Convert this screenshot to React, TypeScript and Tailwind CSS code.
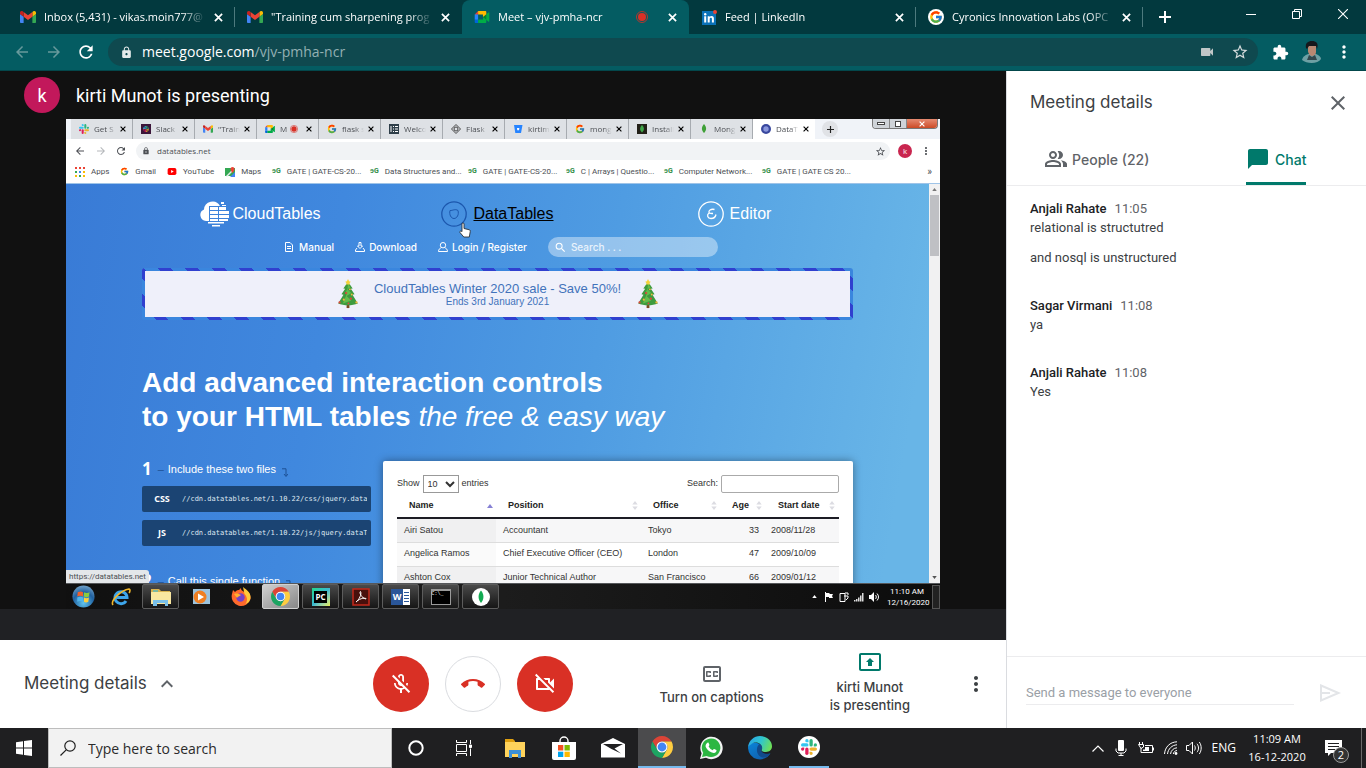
import type { ReactNode } from "react";
import {
  MdArrowBack,
  MdArrowForward,
  MdRefresh,
  MdLock,
  MdVideocam,
  MdStarBorder,
  MdExtension,
  MdMoreVert,
  MdClose,
  MdOutlinePeopleAlt,
  MdChatBubble,
  MdExpandLess,
  MdOutlineMicOff,
  MdCallEnd,
  MdOutlineVideocamOff,
  MdOutlineClosedCaption,
  MdOutlinePresentToAll,
  MdSearch,
} from "react-icons/md";
import { FcGoogle } from "react-icons/fc";

const segoe = "font-['Open_Sans','Noto_Sans',sans-serif]";
const gsans = "font-['Inter','Roboto',sans-serif]";
const roboto = "font-['Roboto',sans-serif]";
const arial = "font-['Liberation_Sans',Arial,sans-serif]";

/* ---------- Logos ---------- */

const Cross = ({ className }: { className?: string }) => (
  <svg viewBox="0 0 10 10" className={className} aria-hidden="true">
    <path d="M1 1l8 8M9 1L1 9" stroke="currentColor" strokeWidth="1.900" />
  </svg>
);

const Plus = ({ className }: { className?: string }) => (
  <svg viewBox="0 0 12 12" className={className} aria-hidden="true">
    <path d="M6 0v12M0 6h12" stroke="currentColor" strokeWidth="2" />
  </svg>
);

const GmailLogo = ({ className }: { className?: string }) => (
  <svg viewBox="52 42 88 66" className={className} aria-hidden="true">
    <path fill="#4285f4" d="M58 108h14V74L52 59v43c0 3.32 2.69 6 6 6" />
    <path fill="#34a853" d="M120 108h14c3.32 0 6-2.69 6-6V59l-20 15" />
    <path fill="#fbbc04" d="M120 48v26l20-15v-8c0-7.42-8.47-11.65-14.4-7.2" />
    <path fill="#ea4335" d="M72 74V48l24 18 24-18v26L96 92" />
    <path fill="#c5221f" d="M52 51v8l20 15V48l-5.6-4.2c-5.94-4.45-14.4-.22-14.4 7.2" />
  </svg>
);

const MeetLogo = ({ className }: { className?: string }) => (
  <svg viewBox="0 0 87.5 72" className={className} aria-hidden="true">
    <path fill="#00832d" d="M49.5 36l8.53 9.75 11.47 7.33 2-17.02-2-16.64-11.69 6.44z" />
    <path fill="#0066da" d="M0 51.5V66c0 3.315 2.685 6 6 6h14.5l3-10.96-3-9.54-9.95-3z" />
    <path fill="#e94235" d="M20.5 0L0 20.5l10.55 3 9.95-3 2.95-9.41z" />
    <path fill="#2684fc" d="M20.5 20.5H0v31h20.5z" />
    <path fill="#00ac47" d="M82.6 8.68L69.5 19.42v33.66l13.16 10.79c1.97 1.54 4.85.135 4.85-2.37V11c0-2.535-2.945-3.925-4.91-2.32zM49.5 36v15.5h-29V72h43c3.315 0 6-2.685 6-6V53.08z" />
    <path fill="#ffba00" d="M63.5 0h-43v20.5h29V36l20-16.57V6c0-3.315-2.685-6-6-6z" />
  </svg>
);

const LinkedInLogo = () => (
  <svg viewBox="0 0 16 16" className="size-4" aria-hidden="true">
    <path fill="#0a72b8" d="M1 2h14v14H1z" />
    <circle cx="4.2" cy="5.2" r="1.2" fill="#fff" />
    <path fill="#fff" d="M3.200 7.200h2v6.300h-2zM6.700 7.200h1.900v.9c.4-.7 1.100-1.100 2-1.100 1.700 0 2.300 1.100 2.300 2.700v3.800h-2V10c0-.8-.3-1.300-1-1.300-.8 0-1.200.6-1.200 1.400v3.400h-2z" />
    <circle cx="14" cy="3" r="2" fill="#ea4335" />
  </svg>
);

const RecordDot = ({ className }: { className?: string }) => (
  <svg viewBox="0 0 12 12" className={className} aria-hidden="true">
    <circle cx="6" cy="6" r="5.500" fill="none" stroke="#d93025" strokeWidth=".8" />
    <circle cx="6" cy="6" r="4" fill="#d93025" />
  </svg>
);

const ChromeLogo = ({ className }: { className?: string }) => {
  const blade = "M24 13h19.05A22 22 0 0 0 4.95 13l9.52 16.500A11 11 0 0 1 24 13z";
  return (
    <svg viewBox="2 2 44 44" className={className} aria-hidden="true">
      <path d={blade} fill="#db4437" />
      <path d={blade} fill="#ffcd40" transform="rotate(120 24 24)" />
      <path d={blade} fill="#1da462" transform="rotate(240 24 24)" />
      <circle cx="24" cy="24" r="11" fill="#fff" />
      <circle cx="24" cy="24" r="8.800" fill="#4285f4" />
    </svg>
  );
};

const SlackMark = ({ className }: { className?: string }) => (
  <svg viewBox="0 0 20 20" className={className} aria-hidden="true">
    <g fill="#36c5f0">
      <rect x="0" y="5.300" width="9.400" height="4.100" rx="2.050" />
      <path d="M9.400 4.100H7.350A2.050 2.050 0 1 1 9.400 2.050z" />
    </g>
    <g fill="#2eb67d">
      <rect x="10.600" y="0" width="4.100" height="9.400" rx="2.050" />
      <path d="M15.900 9.400V7.350A2.050 2.050 0 1 1 17.950 9.400z" />
    </g>
    <g fill="#ecb22e">
      <rect x="10.600" y="10.600" width="9.400" height="4.100" rx="2.050" />
      <path d="M10.600 15.900h2.050a2.050 2.050 0 1 1-2.050 2.050z" />
    </g>
    <g fill="#e01e5a">
      <rect x="5.300" y="10.600" width="4.100" height="9.400" rx="2.050" />
      <path d="M4.100 10.600v2.050a2.050 2.050 0 1 1-2.050-2.050z" />
    </g>
  </svg>
);

const WhatsAppLogo = () => (
  <svg viewBox="0 0 24 24" className="size-6" aria-hidden="true">
    <path fill="#f4f4f4" d="M1 23l1.600-5.800A11.200 11.200 0 1 1 7 21.700z" />
    <path fill="#2cb742" d="M3 21l1.200-4.300a9.300 9.300 0 1 1 3.400 3.200z" />
    <path fill="#fff" d="M8.500 6.700c.4-.4.900-.3 1.100.2l.8 1.900c.1.300 0 .6-.8 1.500.9 1.900 2.200 3.200 4.100 3.900.9-1.100 1.100-1.400 1.600-1.200l2 1c.4.200.2 1.200-.2 1.800-.9 1.200-2.300 1.500-4.200.8-3.200-1.100-5-3.200-6-5.300-.7-1.500-.3-3.400 1.600-4.600z" />
  </svg>
);

const EdgeLogo = () => (
  <svg viewBox="0 0 24 24" className="size-6" aria-hidden="true">
    <defs>
      <linearGradient id="edgeTop" x1="0" y1="0.300" x2="1" y2="0.600">
        <stop offset="0" stopColor="#2aa5e6" />
        <stop offset="0.500" stopColor="#2fc5cf" />
        <stop offset="1" stopColor="#6fe055" />
      </linearGradient>
      <linearGradient id="edgeLeft" x1="0" y1="0" x2="0.700" y2="1">
        <stop offset="0" stopColor="#0a84d8" />
        <stop offset="1" stopColor="#1160ae" />
      </linearGradient>
    </defs>
    <path fill="url(#edgeLeft)" d="M0 12C.5 7 6 6 9 7c5 1.500 5 5 4.500 6-2 3 2 6 8.500 5a12 12 0 0 1-22-6z" />
    <path fill="#114a8b" d="M9 13c0-3 2-5 3-5 2 1 2 4 1.500 5-1.500 3.500 3.500 6 8.200 4.300.8-.2.700.4.300 1C16 25 8 20 9 13z" />
    <path fill="url(#edgeTop)" d="M0 11.500C.5 4.500 6 0 12 0c7 0 12 4.800 12 10.300 0 4-3 5.700-6 5.700-3.400 0-4.800-1.200-4.300-2.200C16 9 9 4 3.500 8 1.500 9.200.4 10.500 0 11.500z" />
  </svg>
);

const FolderIcon = () => (
  <svg viewBox="0 0 24 24" className="size-6" aria-hidden="true">
    <path fill="#e0a010" d="M2 3h8l2 2v4H2z" />
    <path fill="#ffd35c" d="M2 6h20v15H2z" />
    <path fill="#3b8fd6" d="M6 14h12v8h-3v-4H9v4H6z" />
  </svg>
);

const StoreIcon = () => (
  <svg viewBox="0 0 24 24" className="size-6" aria-hidden="true">
    <path d="M8 7V5a4 4 0 0 1 8 0v2" fill="none" stroke="#fff" strokeWidth="1.400" />
    <path fill="#fff" d="M0 6h24v16a2 2 0 0 1-2 2H2a2 2 0 0 1-2-2z" />
    <path fill="#f25022" d="M6 9h5.300v5.500H6z" />
    <path fill="#7fba00" d="M12.500 9h5.300v5.500h-5.300z" />
    <path fill="#00a4ef" d="M6 15.700h5.300V21H6z" />
    <path fill="#ffb900" d="M12.500 15.700h5.300V21h-5.300z" />
  </svg>
);

const MailIcon = () => (
  <svg viewBox="0 0 24 20" className="h-5 w-6" aria-hidden="true">
    <path fill="#fff" d="M0 6L12 0l12 6v13.500H0z" />
    <path fill="#1f1f21" d="M2 6h20l-8.500 4.500L20 15.500 10.500 11z" />
  </svg>
);

/* ---------- Outer browser ---------- */

type Tab = { title: string; icon: ReactNode; active?: boolean; line?: boolean; rec?: boolean };

const tabs: Tab[] = [
  { title: "Inbox (5,431) - vikas.moin777@", icon: <GmailLogo className="h-3 w-4" />, line: true },
  { title: "\"Training cum sharpening prog", icon: <GmailLogo className="h-3 w-4" /> },
  { title: "Meet – vjv-pmha-ncr", icon: <MeetLogo className="h-3 w-4" />, active: true, rec: true },
  { title: "Feed | LinkedIn", icon: <LinkedInLogo />, line: true },
  {
    title: "Cyronics Innovation Labs (OPC",
    icon: (
      <span className="flex size-4 items-center justify-center rounded-full bg-white">
        <FcGoogle className="size-[14px]" />
      </span>
    ),
    line: true,
  },
];

function TabStrip() {
  return (
    <header className={`${segoe} flex h-[34px] shrink-0 bg-[#02393e] pl-2 text-[11px] text-white`}>
      <div className="flex min-w-0">
        {tabs.map((t) => (
          <div
            key={t.title}
            className={
              t.active
                ? "flex w-[227px] items-center rounded-t-lg bg-[#045c62] pr-2 pl-3"
                : "flex w-[227px] items-center pr-2 pl-3"
            }
          >
            {t.icon}
            <span className="ml-2 h-5 flex-1 overflow-hidden leading-5 whitespace-nowrap [mask-image:linear-gradient(to_right,black_85%,transparent)]">
              {t.title}
            </span>
            {t.rec && <RecordDot className="mr-3 size-3" />}
            <button aria-label={`Close ${t.title}`} className="ml-1 flex size-4 items-center justify-center">
              <Cross className="size-[9px]" />
            </button>
            <span className={t.line ? "-mr-2 ml-2 h-5 w-px bg-[#4d7a7e]" : "-mr-2 ml-2 h-5 w-px"} />
          </div>
        ))}
      </div>
      <button aria-label="New tab" className="ml-3 flex w-5 items-center justify-center">
        <Plus className="size-3" />
      </button>
      <div className="ml-auto flex h-7">
        <button aria-label="Minimize" className="flex w-[46px] items-center justify-center">
          <svg viewBox="0 0 10 10" className="size-[10px]"><path d="M0 5.500h10" stroke="#fff" /></svg>
        </button>
        <button aria-label="Restore" className="flex w-[46px] items-center justify-center">
          <svg viewBox="0 0 10 10" className="size-[10px]" fill="none" stroke="#fff">
            <path d="M.5 2.500h7v7h-7zM2.500 2.500v-2h7v7h-2" />
          </svg>
        </button>
        <button aria-label="Close" className="flex w-[46px] items-center justify-center">
          <svg viewBox="0 0 10 10" className="size-[10px]"><path d="M0 0l10 10M10 0L0 10" stroke="#fff" strokeWidth="1.100" /></svg>
        </button>
      </div>
    </header>
  );
}

function Toolbar() {
  return (
    <div className={`${segoe} flex h-[37px] shrink-0 items-center border-b border-[#03474b] bg-[#045c62] pr-3 pl-3 text-white`}>
      <button aria-label="Back" className="flex w-5 justify-center text-[#68999c]"><MdArrowBack className="size-[18px]" /></button>
      <button aria-label="Forward" className="ml-3 flex w-5 justify-center text-[#68999c]"><MdArrowForward className="size-[18px]" /></button>
      <button aria-label="Reload" className="ml-3 flex w-5 justify-center"><MdRefresh className="size-5" /></button>
      <div className="ml-3 flex h-7 flex-1 items-center rounded-full bg-[#0f494f] pr-[9px] pl-3">
        <MdLock className="size-[13px] text-[#e4eaea]" />
        <span className="ml-[9px] text-[14px] leading-5">
          meet.google.com<span className="text-[#93b0b3]">/vjv-pmha-ncr</span>
        </span>
        <MdVideocam className="mr-4 ml-auto size-4 text-[#c0c6c7]" />
        <MdStarBorder className="size-[18px] text-[#d5dcdd]" />
      </div>
      <button aria-label="Extensions" className="ml-3 flex w-5 justify-center"><MdExtension className="size-[17px]" /></button>
      <svg viewBox="0 0 20 22" className="ml-3 h-[22px] w-5" role="img" aria-label="Profile">
        <path fill="#6ea0a4" d="M0 19c1-4 4-5 6-6h8c3 1 5 3 5 5-3 5-14 5-19 1z" />
        <path fill="#b98872" d="M6 5h8v6c0 3-3 4-4 4s-4-2-4-5z" />
        <path fill="#15181c" d="M4 7C3 2 6 0 10 0s7 2 5 8l-1-3-7 0-2 3z" />
        <path fill="#33474c" d="M7 14l3 2 3-2 2 5H5z" />
      </svg>
      <button aria-label="Menu" className="ml-3 flex w-5 justify-center"><MdMoreVert className="size-5" /></button>
    </div>
  );
}

/* ---------- Presented screen ---------- */

const geeks = <span className="w-[9px] text-[7px] leading-none font-bold text-[#2f8d46]">ɘG</span>;

const innerTabs: { label: string; icon: ReactNode }[] = [
  { label: "Get S", icon: <SlackMark className="size-[10px]" /> },
  { label: "Slack", icon: <span className="flex size-[10px] items-center justify-center bg-[#3b1539]"><SlackMark className="size-[6px]" /></span> },
  { label: "\"Train", icon: <GmailLogo className="h-2 w-[10px]" /> },
  { label: "M", icon: <MeetLogo className="h-2 w-[10px]" /> },
  { label: "flask s", icon: <FcGoogle className="size-[10px]" /> },
  {
    label: "Welco",
    icon: (
      <svg viewBox="0 0 10 10" className="size-[10px]"><path fill="#2f3f4a" d="M0 0h10v10H0z" /><path stroke="#fff" d="M2 2v6M4 2.500h1M6 2.500h3M4 5h1M6 5h3M4 7.500h1M6 7.500h3" /></svg>
    ),
  },
  {
    label: "Flask",
    icon: (
      <svg viewBox="0 0 10 10" className="size-[10px]" fill="none" stroke="#444"><path d="M5 .5L9.500 5 5 9.500.5 5z" /><circle cx="5" cy="5" r="2" /></svg>
    ),
  },
  {
    label: "kirtim",
    icon: (
      <svg viewBox="0 0 10 10" className="size-[10px]"><path fill="#2684ff" d="M1 1h8.500L8 9H2.300z" /><path fill="#fff" d="M4 4h2.400L6 6.300H4.300z" /></svg>
    ),
  },
  { label: "mong", icon: <FcGoogle className="size-[10px]" /> },
  {
    label: "Install",
    icon: (
      <svg viewBox="0 0 10 10" className="size-[10px]"><path fill="#222018" d="M0 0h10v10H0z" /><path fill="#3fa548" d="M5 1c3 3 2 6 0 7.500C3 7 2 4 5 1z" /></svg>
    ),
  },
  {
    label: "Mong",
    icon: <svg viewBox="0 0 10 10" className="size-[10px]"><path fill="#3fa037" d="M5 0c3.500 4 2 7 0 9C3 7 1.500 4 5 0z" /></svg>,
  },
  {
    label: "DataT",
    icon: (
      <svg viewBox="0 0 10 10" className="size-[10px]"><circle cx="5" cy="5" r="5" fill="#39489e" /><circle cx="5" cy="5" r="2.700" fill="#8a97dc" /></svg>
    ),
  },
];

const gateLinks = [
  "GATE | GATE-CS-20...",
  "Data Structures and...",
  "GATE | GATE-CS-20...",
  "C | Arrays | Questio...",
  "Computer Network...",
  "GATE | GATE CS 20...",
];

function InnerChrome() {
  return (
    <div className={`${segoe} shrink-0 text-[8px] text-[#4c4f54]`}>
      <div className="flex h-5 bg-[#f0f3f8] pl-[5px]">
        {innerTabs.map((t, i) => (
          <div
            key={t.label}
            className={
              i === 11
                ? "flex w-[62px] items-center bg-white pr-[5px] pl-2"
                : "flex w-[62px] items-center border-r border-[#a7abb0] bg-[#dee1e5] pr-[5px] pl-2"
            }
          >
            {t.icon}
            <span className="ml-[5px] h-3 w-5 flex-1 overflow-hidden leading-3 whitespace-nowrap [mask-image:linear-gradient(to_right,black_60%,transparent)]">{t.label}</span>
            {i === 3 && <RecordDot className="mr-1 size-2" />}
            <Cross className="mr-px ml-1 size-[6px] text-black" />
          </div>
        ))}
        <span className="ml-[7px] flex size-4 items-center justify-center self-center rounded-full bg-[#e0e2e6]">
          <Plus className="size-[7px] text-[#222]" />
        </span>
        <div className="mr-[2px] ml-auto flex h-[10px] overflow-hidden rounded-b-sm border border-t-0 border-[#777]">
          <span className="flex w-[17px] items-center justify-center border-r border-[#888] bg-[#cfd3d8]"><span className="h-[3px] w-2 border border-[#444] bg-white" /></span>
          <span className="flex w-[17px] items-center justify-center border-r border-[#888] bg-[#cfd3d8]"><span className="size-[6px] border border-[#444] bg-white" /></span>
          <span className="flex w-[30px] items-center justify-center bg-gradient-to-b from-[#e58a70] to-[#cc4a24]"><Cross className="size-[6px] text-white" /></span>
        </div>
      </div>
      <div className="flex h-6 items-center bg-white pr-2 pl-2">
        <MdArrowBack className="size-3" />
        <MdArrowForward className="ml-[9px] size-3 text-[#b5b8bb]" />
        <MdRefresh className="ml-2 size-3" />
        <div className="ml-[9px] flex h-[18px] flex-1 items-center rounded-full bg-[#f1f3f5] pr-1 pl-[6px]">
          <MdLock className="size-2" />
          <span className="ml-[7px]">datatables.net</span>
          <MdStarBorder className="ml-auto size-[11px]" />
        </div>
        <span className="ml-2 flex size-[14px] items-center justify-center rounded-full bg-[#c9264f] text-white">k</span>
        <MdMoreVert className="ml-2 size-3" />
      </div>
      <div className="flex h-[21px] items-center gap-[11px] border-b border-[#9fc4e8] bg-white pr-2 pb-[3px] pl-[9px] font-['Roboto',sans-serif] whitespace-nowrap">
        <span className="flex items-center gap-[6px]">
          <svg viewBox="0 0 10 10" className="size-[10px]">
            <path fill="#ea4335" d="M0 0h2v2H0zM4 0h2v2H4zM8 0h2v2H8z" />
            <path fill="#34a853" d="M0 4h2v2H0zM4 8h2v2H4z" />
            <path fill="#4285f4" d="M4 4h2v2H4z" />
            <path fill="#fbbc04" d="M8 4h2v2H8zM8 8h2v2H8zM0 8h2v2H0z" />
          </svg>
          Apps
        </span>
        <span className="flex items-center gap-[6px]"><FcGoogle className="size-[9px]" />Gmail</span>
        <span className="flex items-center gap-[6px]">
          <svg viewBox="0 0 10 8" className="h-[7px] w-[10px]"><rect width="10" height="8" rx="2" fill="#f00" /><path fill="#fff" d="M4 2.300L7 4 4 5.700z" /></svg>
          YouTube
        </span>
        <span className="flex items-center gap-[6px]">
          <svg viewBox="0 0 10 10" className="size-[10px]">
            <path fill="#34a853" d="M0 1h10v8H0z" /><path fill="#4285f4" d="M5 10l5-5v5z" /><path fill="#e8eaed" d="M1 9l7-7 1 1-7 7z" />
            <path fill="#ea4335" d="M7.500 0a2 2 0 0 1 2 2C9.500 3.500 7.500 6 7.500 6s-2-2.500-2-4a2 2 0 0 1 2-2z" />
          </svg>
          Maps
        </span>
        {gateLinks.map((g, i) => (
          <span key={i} className="flex w-[87px] items-center gap-[6px]">{geeks}{g}</span>
        ))}
        <span className="ml-auto text-[10px]">»</span>
      </div>
    </div>
  );
}

const people = [
  ["Airi Satou", "Accountant", "Tokyo", "33", "2008/11/28"],
  ["Angelica Ramos", "Chief Executive Officer (CEO)", "London", "47", "2009/10/09"],
  ["Ashton Cox", "Junior Technical Author", "San Francisco", "66", "2009/01/12"],
];

const Sort = () => (
  <svg viewBox="0 0 6 10" className="h-[9px] w-[6px]" fill="#dcdce2" aria-hidden="true"><path d="M0 4l3-4 3 4zM0 6h6l-3 4z" /></svg>
);

function DataCard() {
  return (
    <div className="h-[160px] min-w-0 flex-1 rounded-t-[2px] bg-white px-[14px] pt-[14px] text-[9px] text-[#333] shadow-[0_0_8px_rgba(0,0,0,0.4)]">
      <div className="flex h-[18px] items-center justify-between">
        <div className="flex items-center gap-[3px]">
          <label htmlFor="len">Show</label>
          <select id="len" className="h-[18px] w-9 border border-[#999] bg-white text-[9px]" defaultValue="10">
            <option>10</option>
            <option>25</option>
          </select>
          <span>entries</span>
        </div>
        <div className="flex items-center gap-[3px]">
          <label htmlFor="filter">Search:</label>
          <input id="filter" className="h-[18px] w-[118px] rounded-[2px] border border-[#aaa] bg-white px-1" />
        </div>
      </div>
      <table className="mt-px w-full table-fixed border-collapse whitespace-nowrap">
        <colgroup>
          <col className="w-[99px]" /><col className="w-[145px]" /><col className="w-[79px]" /><col className="w-[44px]" /><col />
        </colgroup>
        <thead>
          <tr className="h-6 border-b-2 border-[#1c1c24] text-left text-[#222]">
            <th className="p-0 pl-3">
              <div className="flex items-center justify-between pr-[3px]">Name
                <svg viewBox="0 0 6 4" className="h-1 w-[6px]"><path fill="#8681d4" d="M0 4l3-4 3 4z" /></svg>
              </div>
            </th>
            <th className="p-0 pl-3"><div className="flex items-center justify-between pr-[3px]">Position <Sort /></div></th>
            <th className="p-0 pl-3"><div className="flex items-center justify-between pr-[3px]">Office <Sort /></div></th>
            <th className="p-0 pl-3"><div className="flex items-center justify-between pr-[2px]">Age <Sort /></div></th>
            <th className="p-0 pl-[14px]"><div className="flex items-center justify-between pr-[4px]">Start date <Sort /></div></th>
          </tr>
        </thead>
        <tbody>
          {people.map((r, i) => (
            <tr key={r[0]} className={i % 2 ? "h-6 border-b border-[#ddd] bg-white" : "h-6 border-b border-[#ddd] bg-[#f7f7f8]"}>
              <td className={i % 2 ? "bg-[#fafafa] p-0 pl-[7px]" : "bg-[#f0f0f1] p-0 pl-[7px]"}>{r[0]}</td>
              <td className="p-0 pl-[7px]">{r[1]}</td>
              <td className="p-0 pl-[7px]">{r[2]}</td>
              <td className="p-0 pr-[5px] text-right">{r[3]}</td>
              <td className="p-0 pl-[7px]">{r[4]}</td>
            </tr>
          ))}
        </tbody>
      </table>
    </div>
  );
}

const Tree = () => (
  <svg viewBox="0 0 22 32" className="h-[30px] w-[22px]" aria-hidden="true">
    <path fill="#7a4a1e" d="M9.500 26h3v5h-3z" />
    <path fill="#3e9b3f" d="M11 3l5 7-2 .3 4 6-2.200.4L21.500 26c-6 2.500-15 2.500-21 0L6.200 16.700 4 16.300l4-6L6 10z" />
    <path fill="#62bd4b" d="M11 4l2.500 5-3 2 4 4-5 3 5 5-9 3 3-7 1-3-1-2 2-4z" />
    <path fill="#f7d33a" d="M11 0l1.200 2.500L14 3l-1.500 1.500.3 2L11 5.500 9.200 6.500l.3-2L8 3l1.800-.5z" />
    <g fill="#e0463c"><circle cx="9" cy="15" r="1.200" /><circle cx="14" cy="21" r="1.200" /><circle cx="2" cy="25" r="1.200" /><circle cx="11.500" cy="26" r="1" /></g>
    <g fill="#f3b63b"><circle cx="13" cy="11" r="1" /><circle cx="6.500" cy="22" r="1.100" /><circle cx="20" cy="25" r="1.200" /><circle cx="15" cy="16.500" r="1" /></g>
  </svg>
);

function Step({ n, text }: { n: string; text: string }) {
  return (
    <div className="flex h-4 items-center text-[11px] font-medium text-white">
      <span className="font-['Open_Sans',sans-serif] text-[17px] leading-4 font-bold">{n}</span>
      <span className="ml-[6px] w-[10px] text-[#1d5195]">–</span>
      <span>{text}</span>
      <svg viewBox="0 0 6 10" className="mt-2 ml-[6px] h-[10px] w-[6px]" fill="none" stroke="#1d5195"><path d="M0 .8h4v7M2 6l2 2.500L6 6" /></svg>
    </div>
  );
}

function CodeBar({ kind, url }: { kind: string; url: string }) {
  return (
    <div className="flex h-[26px] items-center rounded-[2px] bg-[#1b4473] pr-1 text-white">
      <span className="w-10 text-center font-['Open_Sans',sans-serif] text-[9px] font-bold">{kind}</span>
      <code className="h-3 flex-1 overflow-hidden font-['DejaVu_Sans_Mono','Liberation_Mono',monospace] text-[7px] leading-3 whitespace-nowrap text-[#dfe8f2]">{url}</code>
    </div>
  );
}

function DataTablesPage() {
  return (
    <div className={`${arial} relative flex min-h-0 flex-1 bg-white`}>
      <div className="min-w-0 flex-1 overflow-hidden bg-[linear-gradient(100deg,#397bd6_0%,#4088de_30%,#4f9ce2_60%,#68b5e7_95%)] px-[76px] pt-4">
        <nav className="grid h-7 grid-cols-3 text-[16px] text-white">
          <a href="#cloud" className="flex items-center justify-center gap-[3px]">
            <svg viewBox="0 0 29 26" className="h-[26px] w-[29px]" fill="#fff">
              <path d="M9 20H6a6 6 0 0 1-2-11.500A8.500 8.500 0 0 1 20 5H9z" />
              <path d="M10 6h8v3h-8zM19 6h7v3h-7zM10 10h8v3h-8zM19 10h10v3H19zM10 14h8v3h-8zM19 14h10v3H19zM10 18h8v2h-8zM19 18h9v2h-9zM8 21h16v1.500H8zM12 24h8v1.500h-8zM21 1h3v2h-3zM22 4h4v1h-4z" />
            </svg>
            CloudTables
          </a>
          <a href="#datatables" className="relative flex items-center justify-center gap-[6px] text-black underline">
            <svg viewBox="0 0 26 26" className="size-[26px]" fill="none" stroke="#1c57ad">
              <circle cx="13" cy="13" r="12.200" strokeWidth="1.300" />
              <path d="M9 9.500c2.500.3 5-2 8 0 1.200 4-1 8-4 8s-5-4-4-8z" />
            </svg>
            DataTables
            <svg viewBox="0 0 12 16" className="absolute top-[22px] left-20 h-4 w-3" fill="#fff" stroke="#222" strokeWidth=".8">
              <path d="M3 9V2c0-1.500 2-1.500 2 0v4.500l5 1.200c1.200.3 1.400 1 1.200 2L10.300 15H4.800L1 10.500c-.7-1.300 1-2 2-.8z" />
            </svg>
          </a>
          <a href="#editor" className="flex items-center justify-center gap-[6px]">
            <svg viewBox="0 0 26 26" className="size-[26px]" fill="none" stroke="#fff">
              <circle cx="13" cy="13" r="12.200" strokeWidth="1.300" />
              <path strokeWidth="1.300" d="M16.500 8.500c-4-1-6 1.500-5.500 3 .4 1.200 2 1 4 1M11 12c-2.500 2-1.500 5.500 2 5.500 2.500 0 4.500-1.500 5-4" />
            </svg>
            Editor
          </a>
        </nav>
        <div className={`${gsans} mt-[9px] flex h-5 items-center justify-center gap-[21px] pl-2 text-[10px] font-medium text-white`}>
          <a href="#manual" className="flex items-center gap-[6px]">
            <svg viewBox="0 0 8 10" className="h-[10px] w-2" fill="none" stroke="#fff"><path d="M.5.5h4.500l2.500 2.500v6.500h-7zM2 4.500h4M2 6.500h4" /></svg>
            Manual
          </a>
          <a href="#download" className="flex items-center gap-1">
            <svg viewBox="0 0 10 10" className="size-[10px]" fill="none" stroke="#fff"><path d="M4 .5h2V4h1.500L5 6.500 2.500 4H4zM2 6L.5 8v1.500h9V8L8 6" /></svg>
            Download
          </a>
          <a href="#login" className="flex items-center gap-1">
            <svg viewBox="0 0 10 10" className="size-[10px]" fill="none" stroke="#fff"><circle cx="5" cy="3.200" r="2.700" /><path d="M3.500 5.500C1.500 6.500.5 7.500.5 9.500h9c0-2-1-3-3-4" /></svg>
            Login / Register
          </a>
          <div className="flex h-5 w-[170px] items-center rounded-full bg-white/40 pl-[6px]">
            <MdSearch className="size-[13px] shrink-0" />
            <input aria-label="Search site" placeholder="Search . . ." className="ml-1 w-32 bg-transparent placeholder:text-white/80" />
          </div>
        </div>
        <div className="mt-[11px] h-[52px] rounded-[3px] bg-[repeating-linear-gradient(45deg,#3a86de_0_10px,#3040cf_10px_19px)] p-[3px]">
          <div className="flex h-full items-center justify-center bg-[#eff0fa] text-[#4273bb]">
            <Tree />
            <div className="w-[278px] text-center">
              <p className="text-[13px] leading-[15px]">CloudTables Winter 2020 sale - Save 50%!</p>
              <p className="text-[10px] leading-3">Ends 3rd January 2021</p>
            </div>
            <Tree />
          </div>
        </div>
        <h1 className="mt-[46px] text-[28px] leading-[34px] font-bold whitespace-nowrap text-white">
          Add advanced interaction controls
          <br />
          to your HTML tables <em className="font-normal">the free &amp; easy way</em>
        </h1>
        <div className="mt-[27px] flex gap-3">
          <div className="w-[229px] shrink-0">
            <Step n="1" text="Include these two files" />
            <div className="mt-[9px] flex flex-col gap-2">
              <CodeBar kind="CSS" url="//cdn.datatables.net/1.10.22/css/jquery.dataTables.min.css" />
              <CodeBar kind="JS" url="//cdn.datatables.net/1.10.22/js/jquery.dataTables.min.js" />
            </div>
            <div className="mt-[27px]"><Step n="2" text="Call this single function" /></div>
          </div>
          <DataCard />
        </div>
      </div>
      <div className="flex w-[11px] shrink-0 flex-col items-center justify-between bg-[#f1f1f2] py-1">
        <svg viewBox="0 0 6 4" className="h-[3px] w-[5px]" fill="#777"><path d="M0 4l3-4 3 4z" /></svg>
        <span className="mt-1 mb-auto h-[61px] w-[9px] bg-[#bfc0c4]" />
        <svg viewBox="0 0 6 4" className="h-[3px] w-[5px]" fill="#555"><path d="M0 0h6L3 4z" /></svg>
      </div>
      <span className={`${roboto} absolute bottom-0 left-0 rounded-tr-[3px] bg-[#e4e7ea] px-[3px] text-[8px] leading-[13px] text-[#4c4f54]`}>
        https://datatables.net
      </span>
    </div>
  );
}

const seven: { name: string; kind: "plain" | "open" | "lit"; icon: ReactNode }[] = [
  {
    name: "Internet Explorer", kind: "plain",
    icon: (
      <svg viewBox="0 0 20 20" className="size-5" fill="none">
        <path d="M4 10.500h12A6 6 0 1 0 15 14" stroke="#3da5ea" strokeWidth="3" />
        <path d="M2 18C-1 14 10 3 18 2c1.500 0 1 3 0 4" stroke="#f2b72a" strokeWidth="1.600" />
      </svg>
    ),
  },
  {
    name: "Explorer", kind: "open",
    icon: (
      <svg viewBox="0 0 22 20" className="h-5 w-[22px]">
        <path fill="#d9b34f" d="M1 2h8l2 2h9v12H1z" /><path fill="#f9e7a0" d="M1 5h20v12H1z" /><path fill="#7db9a0" d="M3 3h5v2H3z" /><path fill="#79c0ea" d="M3 13h15v6h-3v-3H7v3H3z" />
      </svg>
    ),
  },
  {
    name: "Media Player", kind: "plain",
    icon: (
      <svg viewBox="0 0 18 16" className="h-4 w-[18px]"><rect width="17" height="15" x="1" fill="#9cc3dd" /><circle cx="8" cy="8" r="6.500" fill="#f07f22" /><path fill="#fff" d="M6 4.500l6 3.500-6 3.500z" /></svg>
    ),
  },
  {
    name: "Firefox", kind: "plain",
    icon: (
      <svg viewBox="0 0 20 20" className="size-5">
        <path fill="#ff6a2c" d="M1 7l1-4 2 2c2-2 3-2 4-2l2-2c0 3 2 3 4 4l1-2c3 2 5 5 4.500 9A9 9 0 1 1 1 7z" />
        <path fill="#ffca3a" d="M12 0c4 3 8 6 7.500 11-.5 3-2 5-5 6 3-4 1-8-1-10z" />
        <circle cx="9.500" cy="10.500" r="4.200" fill="#7542c8" /><path fill="#ffb02e" d="M3 7c3-1 5 0 7 1-2 2-3 1-4 3z" />
      </svg>
    ),
  },
  { name: "Chrome", kind: "lit", icon: <ChromeLogo className="size-[19px]" /> },
  {
    name: "PyCharm", kind: "open",
    icon: <span className="flex size-[18px] items-center justify-center bg-gradient-to-br from-[#21d789] via-[#3bb8d0] to-[#e9ee4a]"><span className="flex h-3 w-[13px] items-center justify-center bg-black text-[8px] font-bold text-white">PC</span></span>,
  },
  {
    name: "Acrobat", kind: "open",
    icon: (
      <svg viewBox="0 0 18 18" className="size-[18px]"><path fill="#48100c" stroke="#c3281b" strokeWidth="1.500" d="M1 1h16v16H1z" /><path d="M4 14c3-2 6-8 4.500-10.500C7 4 9 10 14 11c1-1-5-2-10 3" fill="none" stroke="#fff" /></svg>
    ),
  },
  {
    name: "Word", kind: "open",
    icon: <span className="flex h-4 w-[19px] bg-white"><span className="w-3 bg-[#2a5699] text-center text-[9px] leading-4 font-bold text-white">W</span><svg viewBox="0 0 7 16" className="h-4 w-[7px]" stroke="#2a5699"><path d="M1 3.500h5M1 6.500h5M1 9.500h5M1 12.500h5" /></svg></span>,
  },
  {
    name: "Command Prompt", kind: "open",
    icon: <span className="h-4 w-5 border border-t-2 border-[#9a9a9a] bg-black text-left font-['Liberation_Mono',monospace] text-[5px] leading-[7px] text-white">C:\_</span>,
  },
  {
    name: "Compass", kind: "open",
    icon: <svg viewBox="0 0 18 18" className="size-[18px]"><circle cx="9" cy="9" r="9" fill="#fff" /><path fill="#13aa52" d="M9 2.500c3.500 4 3 9 0 12.500C6 11.500 5.500 6.500 9 2.500z" /></svg>,
  },
];

function SevenTaskbar() {
  return (
    <div className={`${segoe} flex h-[26px] shrink-0 items-center border-t border-[#55575a] bg-gradient-to-r from-[#101010] via-[#1c1c1c] to-[#0c0c0c] text-white`}>
      <button aria-label="Start" className="flex h-full w-[34px] items-center justify-center">
        <svg viewBox="0 0 24 24" className="size-[23px]">
          <defs>
            <radialGradient id="orb" cx="0.500" cy="0.800" r="0.800"><stop offset="0" stopColor="#5fc4ee" /><stop offset="0.600" stopColor="#20609f" /><stop offset="1" stopColor="#6fa0c8" /></radialGradient>
          </defs>
          <circle cx="12" cy="12" r="11.500" fill="url(#orb)" />
          <path fill="#f0602a" d="M6 7.500c2-1 4-1 5.500 0V12c-2-1-4-1-6 0z" /><path fill="#8ccb3c" d="M12.500 7.500c2 1 4 1 5.800 0l-.6 4.500c-2 1-3.700 1-5.200 0z" />
          <path fill="#52b5ea" d="M5.500 13c2-1 4-1 6 0v4.500c-1.500-1-4-1-6 0z" /><path fill="#ffcf3c" d="M12.500 13c1.500 1 3.500 1 5.200 0l-.7 4.500c-1.500 1-3 1-4.500 0z" />
        </svg>
      </button>
      <div className="ml-[2px] flex h-full items-stretch gap-[3px]">
        {seven.map((a) => (
          <button
            key={a.name}
            aria-label={a.name}
            className={
              a.kind === "plain"
                ? "flex w-[37px] items-center justify-center"
                : a.kind === "open"
                  ? "flex w-[37px] items-center justify-center rounded-[2px] border border-[#5c5c5c] bg-gradient-to-b from-[#4a4a4a] to-[#161616]"
                  : "flex w-[37px] items-center justify-center rounded-[2px] border border-[#d0d0d0] bg-gradient-to-br from-[#d0d0d0] to-[#888]"
            }
          >
            {a.icon}
          </button>
        ))}
      </div>
      <div className="ml-auto flex items-center gap-[5px]">
        <svg viewBox="0 0 6 4" className="mr-[2px] h-[3px] w-[5px]" fill="#fff"><path d="M0 4l3-4 3 4z" /></svg>
        <svg viewBox="0 0 10 10" className="size-[10px]" fill="#fff"><path d="M1 0h1v10H1zM2 1h3.500v1H9L8 4l1 2H5V5H2z" /></svg>
        <svg viewBox="0 0 10 10" className="size-[10px]" fill="none" stroke="#fff"><path d="M1 1.500h5v8H1zM5 4h4v2L7 8" /><path d="M6 1h3v2" /></svg>
        <svg viewBox="0 0 10 10" className="size-[10px]" fill="#ddd"><path d="M0 8h1.500v1.500H0zM2 7h1.500v2.500H2zM4 5.500h1.500v4H4zM6 3.500h1.500v6H6zM8 1h1.500v8.500H8z" /></svg>
        <svg viewBox="0 0 10 10" className="size-[10px]" fill="#fff"><path d="M0 3h2l3-3v10L2 7H0z" /><path d="M6.500 3c1 1 1 3 0 4M8 1.500c2 2 2 5 0 7" fill="none" stroke="#fff" /></svg>
        <div className="ml-[3px] w-10 text-center font-['Roboto',sans-serif] text-[8px] leading-[11px]">11:10 AM<br />12/16/2020</div>
      </div>
      <span className="ml-[5px] h-6 w-2 border border-[#555] bg-[#222]" />
    </div>
  );
}

/* ---------- Meet ---------- */

function Stage() {
  return (
    <section className="flex min-h-0 flex-1 flex-col bg-[#202124]">
      <div className="flex min-h-0 flex-1 flex-col bg-[#111]">
        <div className={`${roboto} flex h-12 shrink-0 items-center gap-4 pl-6 text-[18px] text-white`}>
          <span className="flex size-9 items-center justify-center rounded-full bg-[#c2185b]">k</span>
          <span>kirti Munot is presenting</span>
        </div>
        <div className="flex min-h-0 flex-1 flex-col px-[66px]">
          <InnerChrome />
          <DataTablesPage />
          <SevenTaskbar />
        </div>
      </div>
      <div className="h-[31px] shrink-0" />
    </section>
  );
}

function ControlBar() {
  return (
    <footer className={`${gsans} grid h-[88px] shrink-0 grid-cols-[1fr_auto_1fr] items-center bg-white text-[#3c4043]`}>
      <button className="flex items-center gap-2 pl-6 text-[17px]">
        Meeting details <MdExpandLess className="size-6 text-[#5f6368]" />
      </button>
      <div className="-ml-[60px] flex gap-4">
        <button aria-label="Turn on microphone" className="flex size-14 items-center justify-center rounded-full bg-[#d93025] text-white"><MdOutlineMicOff className="size-6" /></button>
        <button aria-label="Leave call" className="flex size-14 items-center justify-center rounded-full border border-[#dadce0] text-[#d93025]"><MdCallEnd className="size-6" /></button>
        <button aria-label="Turn on camera" className="flex size-14 items-center justify-center rounded-full bg-[#d93025] text-white"><MdOutlineVideocamOff className="size-6" /></button>
      </div>
      <div className="flex items-center justify-end pr-[18px] text-[13px] font-medium">
        <button className="flex flex-col items-center gap-px"><MdOutlineClosedCaption className="size-6 text-[#5f6368]" /><span className="leading-5">Turn on captions</span></button>
        <button className="ml-[66px] flex flex-col items-center pb-1 text-center leading-[18px]">
          <MdOutlinePresentToAll className="mb-1 size-6 text-[#00796b]" />
          kirti Munot<br />is presenting
        </button>
        <button aria-label="More options" className="ml-[54px]"><MdMoreVert className="size-6" /></button>
      </div>
    </footer>
  );
}

const messages = [
  { who: "Anjali Rahate", at: "11:05", lines: ["relational is structutred", "and nosql is unstructured"] },
  { who: "Sagar Virmani", at: "11:08", lines: ["ya"] },
  { who: "Anjali Rahate", at: "11:08", lines: ["Yes"] },
];

function ChatPanel() {
  return (
    <aside className="flex w-[360px] shrink-0 flex-col border-l border-[#dadce0] bg-white">
      <div className={`${gsans} flex h-16 shrink-0 items-center justify-between pr-4 pl-[23px] text-[17px] text-[#3c4043]`}>
        <h2>Meeting details</h2>
        <button aria-label="Close panel"><MdClose className="size-6 text-[#5f6368]" /></button>
      </div>
      <div className={`${gsans} grid h-[51px] shrink-0 grid-cols-2 justify-items-center border-b border-[#ececee] text-[14px] font-medium`}>
        <button className="flex items-center gap-1 pb-[2px] text-[#5f6368]"><MdOutlinePeopleAlt className="size-6" />People (22)</button>
        <button className="flex items-center gap-[5px] border-b-[3px] border-[#00796b] pt-px text-[#00796b]"><MdChatBubble className="size-6" />Chat</button>
      </div>
      <div className={`${roboto} flex flex-1 flex-col gap-[29px] px-[23px] pt-[13px] text-[13px] leading-[19px] text-[#3c4043]`}>
        {messages.map((m, i) => (
          <article key={i}>
            <h3 className="font-medium text-[#202124]">{m.who}<span className="ml-2 font-normal text-[#5f6368]">{m.at}</span></h3>
            <div className="flex flex-col gap-[11px]">
              {m.lines.map((l) => <p key={l}>{l}</p>)}
            </div>
          </article>
        ))}
      </div>
      <form className={`${roboto} flex h-[72px] shrink-0 items-center border-t border-[#ececee] pr-6 pl-[19px]`}>
        <input aria-label="Send a message to everyone" placeholder="Send a message to everyone" className="h-6 min-w-0 flex-1 border-b border-[#ececee] text-[13px] placeholder:text-[#9aa0a6]" />
        <button type="button" aria-label="Send message" className="ml-6">
          <svg viewBox="0 0 24 24" className="size-6" fill="none" stroke="#e3e5e8" strokeWidth="2"><path d="M3 4.500L20.500 12 3 19.500zM3 12h9" /></svg>
        </button>
      </form>
    </aside>
  );
}

/* ---------- Windows 10 taskbar ---------- */

function Taskbar() {
  return (
    <div className={`${segoe} flex h-10 shrink-0 items-center bg-[#1f1f21] text-white`}>
      <button aria-label="Start" className="flex h-full w-12 items-center justify-center">
        <svg viewBox="0 0 16 16" className="size-4" fill="#fff"><path d="M0 2.300l7-1v6.200H0zM8 1.100L16 0v7.500H8zM0 8.500h7v6.200l-7-1zM8 8.500h8V16l-8-1.100z" /></svg>
      </button>
      <div className="flex h-full w-[344px] items-center border border-[#bdbdbd] bg-[#f2f2f2] pl-[11px]">
        <svg viewBox="0 0 16 16" className="size-4" fill="none" stroke="#1f1f1f" strokeWidth="1.200"><circle cx="10" cy="6" r="5.200" /><path d="M6.200 9.800L.5 15.500" /></svg>
        <input aria-label="Type here to search" placeholder="Type here to search" className="ml-3 w-[280px] bg-transparent text-[14px] placeholder:text-[#2b2b2b]" />
      </div>
      <button aria-label="Cortana" className="flex h-full w-12 items-center justify-center">
        <svg viewBox="0 0 16 16" className="size-4" fill="none" stroke="#fff" strokeWidth="2"><circle cx="8" cy="8" r="6.700" /></svg>
      </button>
      <button aria-label="Task view" className="mr-[3px] flex h-full w-12 items-center justify-center">
        <svg viewBox="0 0 16 16" className="size-4" fill="none" stroke="#fff"><path d="M.5 0v2.500h10V0M.5 4.500h10v7H.5zM.5 16v-2.500h10V16M14.500 0v4M14.500 8.500V16" /><path d="M13.500 5h2v2.500h-2z" fill="#fff" /></svg>
      </button>
      <div className="flex h-full gap-px">
        <button aria-label="File Explorer" className="flex w-12 items-center justify-center"><FolderIcon /></button>
        <button aria-label="Store" className="flex w-12 items-center justify-center"><StoreIcon /></button>
        <button aria-label="Mail" className="flex w-12 items-center justify-center"><MailIcon /></button>
        <button aria-label="Chrome" className="flex w-12 items-center justify-center border-b-2 border-[#76b9ed] bg-[#4b4b4d]"><ChromeLogo className="size-[22px]" /></button>
        <button aria-label="WhatsApp" className="flex w-12 items-center justify-center"><WhatsAppLogo /></button>
        <button aria-label="Edge" className="flex w-12 items-center justify-center"><EdgeLogo /></button>
        <button aria-label="Slack" className="mx-1 flex w-10 items-center justify-center border-b-2 border-[#76b9ed]">
          <span className="flex size-[22px] items-center justify-center rounded-full bg-white"><SlackMark className="size-4" /></span>
        </button>
      </div>
      <div className="ml-auto flex h-full items-center text-[11px]">
        <svg viewBox="0 0 12 7" className="h-[7px] w-3" fill="none" stroke="#fff" strokeWidth="1.200"><path d="M.5 6.500L6 1l5.500 5.500" /></svg>
        <svg viewBox="0 0 12 16" className="ml-[11px] h-4 w-3" fill="none" stroke="#fff"><rect x="3" y="0" width="6" height="11" rx="1" fill="#fff" stroke="none" /><path d="M1 8.500V11l2 2h6l2-2V8.500M6 13v2.500M3.500 15.500h5" /></svg>
        <svg viewBox="0 0 16 12" className="ml-[11px] h-3 w-4" fill="none" stroke="#fff"><path d="M1.500 0v2M4.500 0v2M.5 2.500h5V5L3 6.500zM3 6v4.500h11.500v-7H7M15.500 5.500v3" /><path d="M5 7.500h6v1.500H5zM7 5h4v4H7z" fill="#fff" stroke="none" /></svg>
        <svg viewBox="0 0 14 14" className="ml-[10px] size-[14px]" fill="none" stroke="#fff"><path d="M.5 13C1 6 6 1 13 .8M3.500 13C4 8 8 4 13 3.800M6.500 13c.5-3.500 3-6 6.500-6.200M9.300 13c.3-2 1.700-3.200 3.700-3.500" /><circle cx="12" cy="12.500" r="1.400" fill="#fff" stroke="none" /></svg>
        <svg viewBox="0 0 16 14" className="ml-2 h-[14px] w-4" fill="none" stroke="#fff"><path d="M.5 4.500h2.500L6.500 1v12L3 9.500H.5zM8.500 4.500c1 1.500 1 3.500 0 5M11 2.800c2 2.500 2 6 0 8.400M13.300 1c2.500 3.500 2.500 8.500 0 12" /></svg>
        <span className="ml-[10px] text-[12px]">ENG</span>
        <div className="ml-2 w-[66px] text-center leading-[18px] whitespace-nowrap">11:09 AM<br />16-12-2020</div>
        <button aria-label="Notifications, 2 new" className="relative ml-[15px] h-[22px] w-6">
          <svg viewBox="0 0 17 16" className="h-4 w-[17px]"><path fill="#fff" d="M0 0h17v13H6l-3 3v-3H0z" /><path stroke="#1f1f21" d="M3 3.500h11M3 6.500h11M3 9.500h7" /></svg>
          <span className="absolute right-0 -bottom-1 flex size-4 items-center justify-center rounded-full border border-[#9a9a9a] bg-[#333] text-[11px]">2</span>
        </button>
        <span className="ml-3 h-full w-[5px] border-l border-[#6a6a6a]" />
      </div>
    </div>
  );
}

export default function App() {
  return (
    <div className="flex h-screen flex-col overflow-hidden">
      <TabStrip />
      <Toolbar />
      <div className="flex min-h-0 flex-1">
        <main className="flex min-w-0 flex-1 flex-col">
          <Stage />
          <ControlBar />
        </main>
        <ChatPanel />
      </div>
      <Taskbar />
    </div>
  );
}
